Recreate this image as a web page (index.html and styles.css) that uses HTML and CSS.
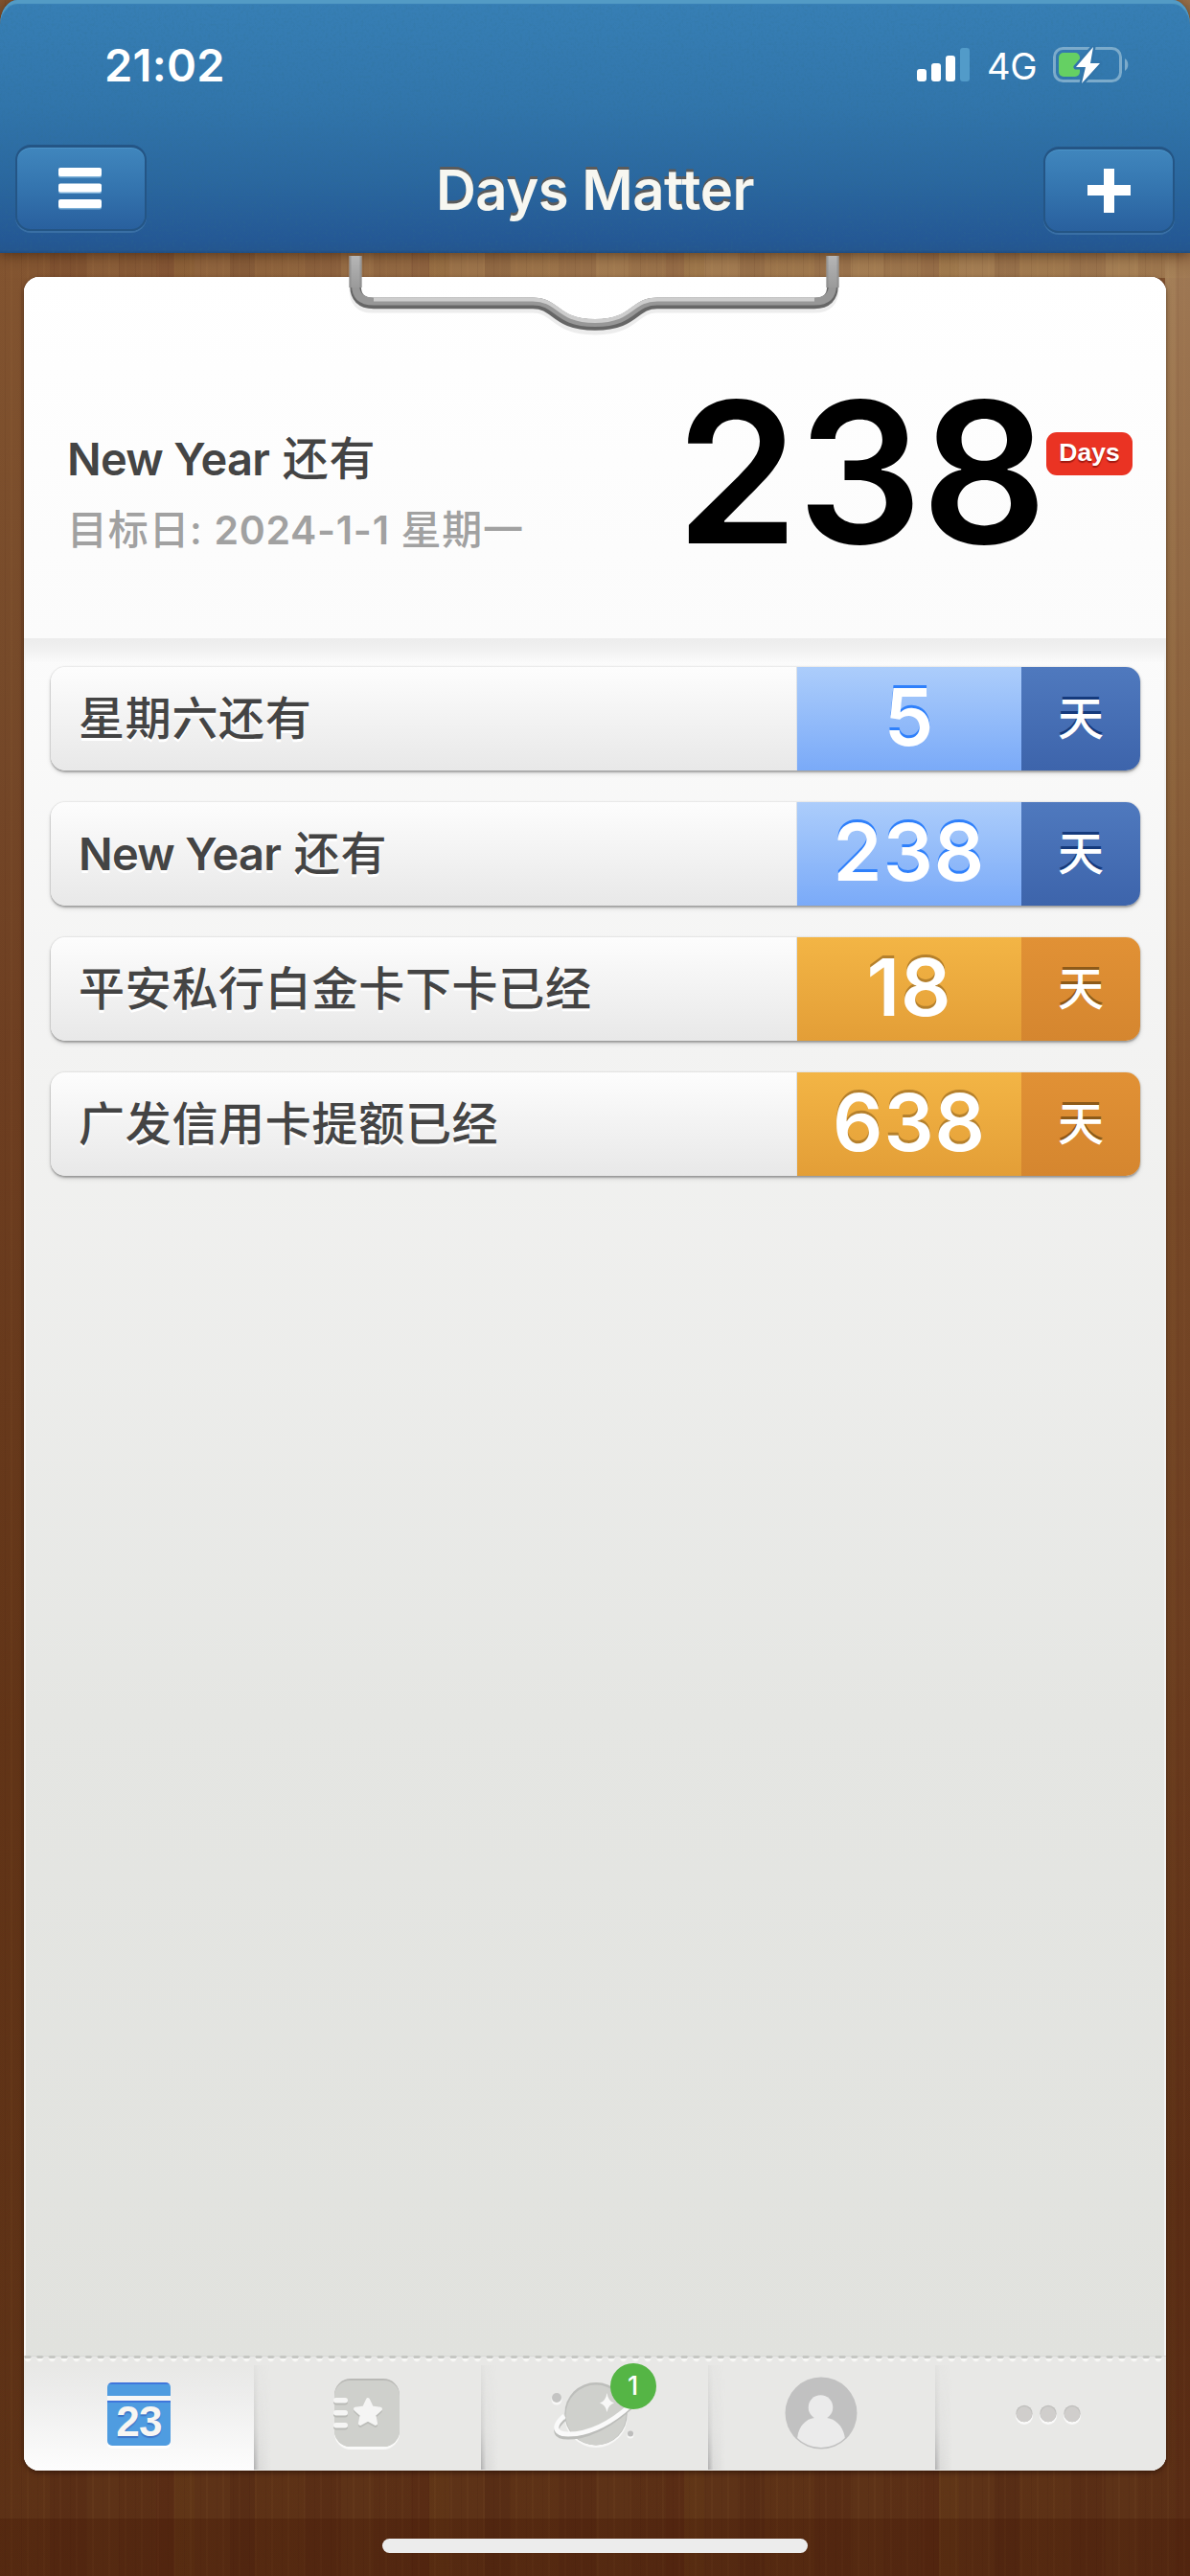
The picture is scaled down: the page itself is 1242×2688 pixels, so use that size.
FILE: index.html
```html
<!DOCTYPE html>
<html lang="zh-CN">
<head>
<meta charset="utf-8">
<title>Days Matter</title>
<link rel="stylesheet" href="styles.css">
</head>
<body>
<div class="screen">
  <header class="header">
    <svg class="grain" aria-hidden="true">
      <filter id="grain"><feTurbulence type="fractalNoise" baseFrequency="0.35" numOctaves="3" seed="4"/><feColorMatrix values="0 0 0 0 0.03  0 0 0 0 0.16  0 0 0 0 0.25  1.6 0 0 0 -0.75"/></filter>
      <rect width="100%" height="100%" filter="url(#grain)"/>
    </svg>
    <div class="status">
      <span class="time">21:02</span>
      <div class="status-right">
        <svg class="signal" viewBox="0 0 55 35"><g fill="#fff"><rect y="22" width="10" height="13" rx="3"/><rect x="15" y="16" width="10" height="19" rx="3"/><rect x="30" y="8" width="10" height="27" rx="3"/></g><rect x="45" width="10" height="35" rx="3" fill="#529bc9"/></svg>
        <span class="network">4G</span>
        <svg class="battery" viewBox="0 0 80 40"><rect x="1.5" y="2.5" width="69" height="34" rx="9" fill="none" stroke="#7cabcb" stroke-width="3"/><path d="M75 13a8 8 0 0 1 0 13z" fill="#7cabcb"/><rect x="6" y="7" width="22" height="25" rx="5" fill="#65d063"/><path d="M42 1 24 22h10l-4 17 19-21H39z" fill="#fff" stroke="#3275aa" stroke-width="5" stroke-linejoin="round" paint-order="stroke"/></svg>
      </div>
    </div>
    <nav class="navbar">
      <div class="btn menu-btn"><svg viewBox="0 0 46 44" width="46" height="44"><g fill="#7db0d8"><rect y="1.5" width="45" height="9" rx="2"/><rect y="18" width="45" height="9" rx="2"/><rect y="34.500" width="45" height="9" rx="2"/></g><g fill="#fff"><rect width="45" height="9" rx="2"/><rect y="16.500" width="45" height="9" rx="2"/><rect y="33" width="45" height="9" rx="2"/></g></svg></div>
      <h1 class="title">Days Matter</h1>
      <div class="btn add-btn"><svg viewBox="0 0 45 46" width="45" height="46"><path d="M17 0h11v17h17v11H28v18H17V28H0V17h17z" fill="#fff"/></svg></div>
    </nav>
  </header>
  <main class="card">
    <svg class="clip" viewBox="0 0 520 90" aria-hidden="true">
      <defs><linearGradient id="arm" x1="0" x2="0" y1="0" y2="1"><stop offset="0" stop-color="#b6b6b6"/><stop offset="1" stop-color="#9a9a9a"/></linearGradient></defs>
      <g fill="none" stroke-linejoin="round">
        <path d="M11 3V37Q11 55 28 55H196C222 55 218 78 261 78S300 55 326 55H490Q509 55 509 37V3" stroke="#000" stroke-opacity=".07" stroke-width="13"/>
        <path d="M11 2V33Q11 51.500 30 51.500H196C222 51.500 218 74 261 74S300 51.500 326 51.500H490Q509 51.500 509 33V2" stroke="#666" stroke-width="11.500"/>
        <path d="M11 2V32Q11 49.500 30 49.500H196C223 49.500 219 72 261 72S299 49.500 326 49.500H490Q509 49.500 509 32V2" stroke="#979797" stroke-width="8"/>
        <path d="M30 47.500H196C224 47.500 221 70 261 70S298 47.500 326 47.500H490" stroke="#cdcdcd" stroke-width="4"/>
      </g>
      <g fill="url(#arm)"><rect x="4.500" y="2" width="13" height="33"/><rect x="502.500" y="2" width="13" height="33"/></g>
      <path d="M4.500 2h2v33h-2zM15.500 2h2v33h-2zM502.500 2h2v33h-2zM513.500 2h2v33h-2z" fill="#888" opacity=".6"/>
    </svg>
    <section class="hero">
      <div class="hero-text">
        <p class="hero-title"><span class="latin">New Year</span> 还有</p>
        <p class="hero-date">目标日: <span class="date">2024-1-1</span> 星期一</p>
      </div>
      <div class="hero-count"><span class="big">238</span><span class="days">Days</span></div>
    </section>
    <section class="list">
      <div class="row blue"><span class="name">星期六还有</span><span class="num">5</span><span class="unit">天</span></div>
      <div class="row blue"><span class="name"><span class="latin">New Year</span> 还有</span><span class="num">238</span><span class="unit">天</span></div>
      <div class="row orange"><span class="name">平安私行白金卡下卡已经</span><span class="num">18</span><span class="unit">天</span></div>
      <div class="row orange"><span class="name">广发信用卡提额已经</span><span class="num">638</span><span class="unit">天</span></div>
    </section>
    <nav class="tabs">
      <div class="tab active"><div class="calendar"><span>23</span></div></div>
      <div class="tab"><svg class="book" viewBox="0 0 70 76"><rect y="3" x="1" width="68" height="71" rx="17" fill="#fafaf9"/><rect x="1" width="68" height="71" rx="17" fill="#b9b9b6"/><rect x="1" y="2" width="68" height="69" rx="16" fill="#cfd0cc"/><g fill="#b9bab6"><rect y="21.500" width="15" height="6" rx="3"/><rect y="34.500" width="15" height="6" rx="3"/><rect y="47.500" width="15" height="6" rx="3"/></g><g fill="#f5f5f4"><rect y="20" width="15" height="5.500" rx="2.700"/><rect y="33" width="15" height="5.500" rx="2.700"/><rect y="46" width="15" height="5.500" rx="2.700"/></g><path d="M36 22l4 8.500 9 1.200-6.700 6.200 1.800 9-8.100-4.500-8.100 4.500 1.800-9L23 31.700l9-1.200z" transform="translate(0 2)" fill="#bcbdb9" stroke="#bcbdb9" stroke-width="4" stroke-linejoin="round"/><path d="M36 22l4 8.500 9 1.200-6.700 6.200 1.800 9-8.100-4.500-8.100 4.500 1.800-9L23 31.700l9-1.200z" fill="#f5f5f4" stroke="#f5f5f4" stroke-width="4" stroke-linejoin="round"/></svg></div>
      <div class="tab"><svg class="planet" viewBox="0 0 92 76"><circle cx="48" cy="41" r="33" fill="#f8f8f7"/><circle cx="48" cy="38.700" r="32.800" fill="#bdbebb"/><circle cx="48" cy="40" r="31.500" fill="#cfd0cc"/><circle cx="7" cy="24" r="5.500" fill="#f8f8f7"/><circle cx="7" cy="22" r="5" fill="#c4c4c3"/><circle cx="84" cy="61" r="3.500" fill="#f8f8f7"/><circle cx="84" cy="59.500" r="3" fill="#bdbdbc"/><path d="M15 44C3 55 4 63 19 63 42 63 65 49 84 32" fill="none" stroke="#bcbdba" stroke-width="5"/><path d="M15 41C3 51 4 60 19 60 42 60 65 47 84 30" fill="none" stroke="#fafafa" stroke-width="5"/><path d="M59.500 17Q61 26 67 27.500 61 29 59.500 37 58 29 52 27.500 58 26 59.500 17z" fill="#f8f8f7"/></svg><span class="badge">1</span></div>
      <div class="tab"><svg class="avatar" viewBox="0 0 76 76"><defs><clipPath id="face"><circle cx="38" cy="38" r="36"/></clipPath></defs><circle cx="38" cy="38" r="37.500" fill="#c1c1c1"/><g fill="#ebebeb" clip-path="url(#face)"><circle cx="37.500" cy="32" r="12.800"/><path d="M31 38h13v5c10 1 19 11 19 24 0 10-50 10-50 0 0-13 8-23 18-24z"/></g></svg></div>
      <div class="tab"><svg class="more" viewBox="0 0 70 24"><g fill="#fafafa"><circle cx="10" cy="13" r="9"/><circle cx="35" cy="13" r="9"/><circle cx="60" cy="13" r="9"/></g><g fill="#c1c0be"><circle cx="10" cy="10.500" r="8.700"/><circle cx="35" cy="10.500" r="8.700"/><circle cx="60" cy="10.500" r="8.700"/></g><g fill="#d0cecc"><circle cx="10" cy="11.300" r="8"/><circle cx="35" cy="11.300" r="8"/><circle cx="60" cy="11.300" r="8"/></g></svg></div>
    </nav>
  </main>
  <footer class="foot"><div class="home"></div></footer>
</div>
</body>
</html>
```
FILE: styles.css
```css
* { box-sizing: border-box; }
body { margin: 0; }
h1, p { margin: 0; font-weight: inherit; }
svg { display: block; }

.screen {
  width: 1242px;
  height: 2688px;
  display: flex;
  flex-direction: column;
  overflow: hidden;
  font-family: Inter, "Noto Sans CJK SC", sans-serif;
  background:
    linear-gradient(transparent 2628px, rgba(60, 16, 0, .25) 2628px),
    repeating-linear-gradient(90deg, rgba(90, 40, 0, .06) 0 52px, rgba(50, 0, 0, .09) 52px 90px, transparent 90px 124px, rgba(60, 10, 0, .07) 124px 163px, rgba(60, 0, 0, .12) 163px 182px, rgba(120, 80, 20, .1) 182px 203px, transparent 203px 240px, rgba(40, 0, 0, .1) 240px 266px),
    repeating-linear-gradient(90deg, transparent 0 5px, rgba(40, 5, 0, .06) 5px 6px, transparent 6px 11px, rgba(255, 200, 120, .03) 11px 13px, transparent 13px 17px),
    linear-gradient(90deg, rgba(175, 140, 95, 0) 0, rgba(175, 140, 95, .65) 600px, rgba(175, 140, 95, .75)) 0 0 / 100% 290px no-repeat,
    linear-gradient(transparent 264px, #ab875e 290px, #946c42 800px, #7d502b 1250px, rgba(93, 50, 24, 0) 2300px) 100% 0 / 26px 100% no-repeat,
    linear-gradient(#855733 264px, #784c2c 700px, #6f4023 1100px, #623518 1800px, #5d3217 2628px);
}

.header {
  flex: none;
  position: relative;
  height: 264px;
  border-radius: 18px 18px 0 0 / 26px 26px 0 0;
  background: linear-gradient(#377fb5 0, #3175ab 110px, #2a679f 190px, #245895 250px, #24568f 261px, #204c7f);
  box-shadow: inset 0 5px 1px -1px #539bc5, 0 2px 14px rgba(50, 25, 5, .6);
  z-index: 1;
}
.grain { position: absolute; inset: 5px 0 0; width: 100%; height: 259px; opacity: .3; }

.status {
  position: relative;
  height: 150px;
  padding: 0 63px 0 109px;
  display: flex;
  justify-content: space-between;
  color: #fff;
}
.time { margin-top: 40px; font-size: 47px; line-height: 56px; font-weight: 600; letter-spacing: .3px; }
.status-right { display: flex; }
.signal { width: 55px; height: 35px; margin-top: 50px; }
.network { width: 52px; margin: 45px 17px 0 18px; font-size: 38px; line-height: 48px; font-weight: 400; letter-spacing: -.2px; }
.battery { width: 80px; height: 40px; margin-top: 48px; }

.navbar {
  position: relative;
  height: 114px;
  padding: 0 16px;
  display: flex;
  justify-content: space-between;
}
.btn {
  width: 137px;
  height: 90px;
  display: flex;
  align-items: center;
  justify-content: center;
  border: 2px solid #245585;
  border-top-width: 3px;
  border-radius: 16px;
  background: linear-gradient(#4086bd, #3576b0 45%, #29609e);
  box-shadow: inset 0 1px 0 #4c94c8, 0 2px 0 #396fa5;
}
.menu-btn { margin-top: 1px; padding-right: 1px; }
.add-btn { margin-top: 3px; }
.title {
  font-size: 58px;
  line-height: 70px;
  margin-top: 13px;
  font-weight: 600;
  letter-spacing: -.5px;
  color: #f7f7f1;
  text-shadow: 0 -3px 0 #5b5b5b;
}

.card {
  flex: none;
  position: relative;
  width: 1192px;
  height: 2289px;
  margin: 25px 0 0 25px;
  display: flex;
  flex-direction: column;
  border-radius: 16px;
  background: linear-gradient(#fbfbfb 390px, #f2f2f1 850px, #e5e6e3 1500px, #e1e2de 2170px);
  box-shadow: inset 2px 0 0 #f6f6f6, inset -2px 0 0 #f2f2f1, 0 2px 5px rgba(30, 10, 0, .55);
}
.clip { position: absolute; left: 335px; top: -24px; width: 520px; height: 90px; z-index: 2; }

.hero {
  height: 377px;
  padding: 0 35px 0 45px;
  display: flex;
  justify-content: space-between;
  border-radius: 16px 16px 0 0;
  background: linear-gradient(#fff, #fbfbfb);
}
.hero-text { padding-top: 155px; }
.hero-title { font-size: 48px; line-height: 70px; font-weight: 500; color: #444; letter-spacing: .7px; }
.latin { font-size: 47px; font-weight: 600; letter-spacing: -.7px; }
.hero-date { font-size: 42px; line-height: 70px; margin-top: 4px; font-weight: 500; color: #a1a1a1; letter-spacing: .7px; }
.date { font-size: 41px; font-weight: 600; }
.hero-count { display: flex; align-items: flex-start; }
.big { margin-top: 83px; font-size: 205px; line-height: 240px; font-weight: 600; letter-spacing: -1px; color: #000; }
.days {
  width: 90px;
  height: 45px;
  margin: 162px 0 0 0;
  border-radius: 11px;
  background: #ea3323;
  color: #fff;
  font: bold 26.5px/43px "Liberation Sans", sans-serif;
  text-align: center;
  text-shadow: 0 2px 1px rgba(90, 0, 0, .5);
}

.list {
  flex: 1;
  padding: 30px 27px 0 28px;
  display: flex;
  flex-direction: column;
  gap: 33px;
  background: linear-gradient(#ececec, #f1f1f1 12px, rgba(250, 250, 250, 0) 26px);
}
.row {
  height: 108px;
  display: grid;
  grid-template-columns: 779px 234px 124px;
  border-radius: 15px;
  overflow: hidden;
  line-height: 108px;
  box-shadow: 0 2px 2px rgba(0, 0, 0, .25), 0 3px 5px rgba(0, 0, 0, .12), 0 0 2px rgba(0, 0, 0, .2);
}
.name {
  padding-left: 29px;
  background: linear-gradient(#fdfdfd, #e8e8e8);
  border-right: 1px solid #dde2e8;
  font-size: 48px;
  font-weight: 500;
  letter-spacing: .7px;
  color: #444;
  text-shadow: 0 3px 0 #fff;
  white-space: nowrap;
}
.num, .unit { color: #fff; text-align: center; }
.num { font-size: 82px; font-weight: 600; line-height: 106px; letter-spacing: 1px; }
.unit { font-size: 48px; font-weight: 500; }
.blue .num { background: linear-gradient(#accdfb, #7aaaf8); text-shadow: 0 -3px 0 #2f80fb; }
.blue .unit { background: linear-gradient(#4f79be, #3d64ab); text-shadow: 0 -3px 0 #153a7c; }
.orange .num { background: linear-gradient(#f3b545, #e39e37); text-shadow: 0 -3px 0 #b5802c; }
.orange .unit { background: linear-gradient(#e19135, #d5862f); text-shadow: 0 -3px 0 #8d5a19; }

.tabs {
  position: relative;
  height: 120px;
  display: grid;
  grid-template-columns: 240px 236.500px 237px 237.500px 241px;
  border-radius: 0 0 16px 16px;
  background: #e8e8e6;
  box-shadow: inset 0 1px 0 #d9dad7;
}
.tabs::before {
  content: "";
  position: absolute;
  inset: 0 0 auto;
  height: 8px;
  background:
    radial-gradient(ellipse 4px 2px at 4px 1.5px, #c6c7c3 80%, transparent) 0 0 / 12.700px 4px repeat-x,
    radial-gradient(circle at 4px 1px, #f8f8f6 2.500px, transparent 4px) 0 2px / 12.700px 6px repeat-x;
}
.tab { position: relative; display: flex; justify-content: center; }
.tab + .tab::before {
  content: "";
  position: absolute;
  left: 0;
  top: 10px;
  width: 18px;
  bottom: 1px;
  background: linear-gradient(90deg, #b0b0b0, rgba(190, 190, 190, .3) 30%, transparent);
  -webkit-mask-image: linear-gradient(rgba(0, 0, 0, .1), rgba(0, 0, 0, .4) 60%, #000);
  mask-image: linear-gradient(rgba(0, 0, 0, .1), rgba(0, 0, 0, .4) 60%, #000);
}
.active { border-radius: 0 0 0 16px; background: linear-gradient(transparent 10px, #ebebea 30px, #fdfdfd); }
.calendar {
  width: 66px;
  height: 66px;
  margin: 28px 0 0 0;
  border-radius: 5px;
  background: linear-gradient(#3f76dc 2px, #4f9ce0 2px 14px, #f7f7f7 14px 19px, #3f76dc 19px 21px, #4f9ce0 21px);
  box-shadow: 0 3px 0 #fff;
  color: #f7f6f3;
  font: bold 44px/48px "Liberation Sans", sans-serif;
  text-align: center;
  padding-top: 17px;
  letter-spacing: -.8px;
  text-shadow: 0 2px 1px #3f76c8;
}
.book { width: 70px; height: 76px; margin: 24px 0 0 0; }
.planet { width: 92px; height: 76px; margin: 22px 0 0 0; }
.badge {
  position: absolute;
  left: 135px;
  top: 8px;
  width: 48px;
  height: 48px;
  border-radius: 50%;
  background: #55b545;
  color: #fff;
  font-size: 27px;
  font-weight: 500;
  line-height: 48px;
  text-align: center;
}
.avatar { width: 76px; height: 76px; margin-top: 22px; }
.more { width: 70px; height: 24px; margin: 50px 6px 0 0; }

.foot { flex: 1; display: flex; justify-content: center; }
.home { width: 444px; height: 15px; margin-top: 71px; border-radius: 8px; background: #ececec; }
```
